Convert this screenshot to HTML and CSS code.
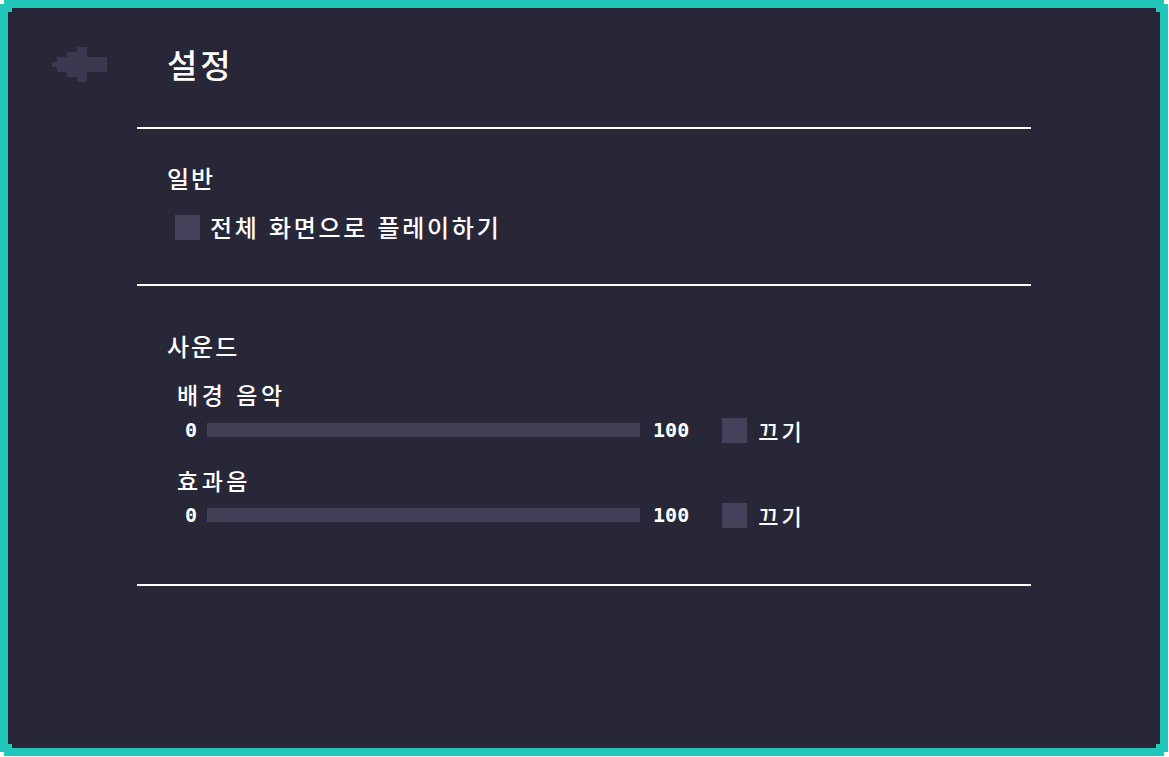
FILE: index.html
```html
<!DOCTYPE html>
<html lang="ko">
<head>
<meta charset="utf-8">
<title>설정</title>
<link rel="stylesheet" href="styles.css">
</head>
<body>
<div class="frame">
  <div class="panel">
    <header class="header">
      <button class="back" aria-label="뒤로">
        <svg width="55" height="35" viewBox="0 0 55 35" shape-rendering="crispEdges">
          <g fill="#3b3950">
            <rect x="25" y="0" width="10" height="5"/>
            <rect x="15" y="5" width="20" height="5"/>
            <rect x="5" y="10" width="50" height="15"/>
            <rect x="0" y="15" width="5" height="5"/>
            <rect x="15" y="25" width="20" height="5"/>
            <rect x="25" y="30" width="10" height="5"/>
          </g>
        </svg>
      </button>
      <h1 class="title">설정</h1>
    </header>
    <main class="content">
      <hr class="rule">
      <section class="section general">
        <h2 class="section-title">일반</h2>
        <label class="check-row">
          <span class="box"></span>
          <span class="check-text">전체 화면으로 플레이하기</span>
        </label>
      </section>
      <hr class="rule">
      <section class="section sound">
        <h2 class="section-title">사운드</h2>
        <div class="control">
          <div class="label">배경 음악</div>
          <div class="slider-row">
            <span class="num">0</span>
            <span class="track"></span>
            <span class="num num-max">100</span>
            <span class="box mute-box"></span>
            <span class="mute">끄기</span>
          </div>
        </div>
        <div class="control second">
          <div class="label">효과음</div>
          <div class="slider-row">
            <span class="num">0</span>
            <span class="track"></span>
            <span class="num num-max">100</span>
            <span class="box mute-box"></span>
            <span class="mute">끄기</span>
          </div>
        </div>
      </section>
      <hr class="rule">
    </main>
  </div>
</div>
</body>
</html>
```

FILE: styles.css
```css
html, body {
  margin: 0;
  padding: 0;
  background: #ffffff;
}

body {
  font-family: "Noto Sans CJK KR", "Noto Sans", sans-serif;
  color: #ffffff;
  -webkit-font-smoothing: none;
}

.frame {
  width: 1168px;
  height: 756px;
  background: #21c6bb;
  clip-path: polygon(4px 0, 1164px 0, 1164px 4px, 1168px 4px, 1168px 752px, 1164px 752px, 1164px 756px, 4px 756px, 4px 752px, 0 752px, 0 4px, 4px 4px);
  display: flex;
}

.panel {
  margin: 8px;
  flex: 1;
  background: #282738;
  clip-path: polygon(4px 0, calc(100% - 4px) 0, calc(100% - 4px) 4px, 100% 4px, 100% calc(100% - 4px), calc(100% - 4px) calc(100% - 4px), calc(100% - 4px) 100%, 4px 100%, 4px calc(100% - 4px), 0 calc(100% - 4px), 0 4px, 4px 4px);
  display: flex;
  flex-direction: column;
}

.header {
  height: 112px;
  display: flex;
  align-items: center;
  padding-left: 44px;
}

.back {
  background: none;
  border: 0;
  padding: 0;
  margin: 0;
  width: 55px;
  height: 35px;
  display: block;
  cursor: pointer;
}

.back svg {
  display: block;
}

.title {
  margin: 0 0 0 60px;
  font-size: 33px;
  font-weight: 500;
  letter-spacing: 3px;
  line-height: 40px;
}

.content {
  margin-left: 129px;
  width: 894px;
  padding-top: 7px;
}

.rule {
  margin: 0;
  border: 0;
  height: 2px;
  background: #ffffff;
}

.section {
  padding-left: 30px;
}

.section-title {
  margin: 0;
  font-size: 24px;
  font-weight: 500;
  letter-spacing: 2px;
  line-height: 30px;
}

.general {
  padding-top: 34px;
  padding-bottom: 42px;
}

.check-row {
  display: flex;
  align-items: center;
  height: 30px;
  margin-top: 19px;
  margin-left: 8px;
}

.box {
  width: 25px;
  height: 25px;
  background: #43425a;
  flex: none;
}

.check-text {
  margin-left: 10px;
  font-size: 24px;
  font-weight: 500;
  letter-spacing: 2.7px;
  line-height: 30px;
}

.sound {
  padding-top: 45px;
  padding-bottom: 56px;
}

.control {
  margin-top: 20px;
  padding-left: 10px;
}

.control.second {
  margin-top: 24px;
}

.label {
  font-size: 23px;
  font-weight: 500;
  letter-spacing: 3.5px;
  line-height: 26px;
}

.slider-row {
  display: flex;
  align-items: center;
  height: 26px;
  margin-top: 10px;
  padding-left: 8px;
}

.control.second .slider-row {
  margin-top: 9px;
}

.num {
  font-family: "DejaVu Sans Mono", "Liberation Mono", monospace;
  font-weight: bold;
  font-size: 20px;
  line-height: 26px;
}

.track {
  width: 433px;
  height: 14px;
  background: #403f55;
  margin-left: 10px;
}

.num-max {
  margin-left: 13px;
}

.mute-box {
  margin-left: 33px;
}

.mute {
  margin-left: 11px;
  font-size: 22px;
  font-weight: 500;
  letter-spacing: 3px;
  line-height: 26px;
}
```
